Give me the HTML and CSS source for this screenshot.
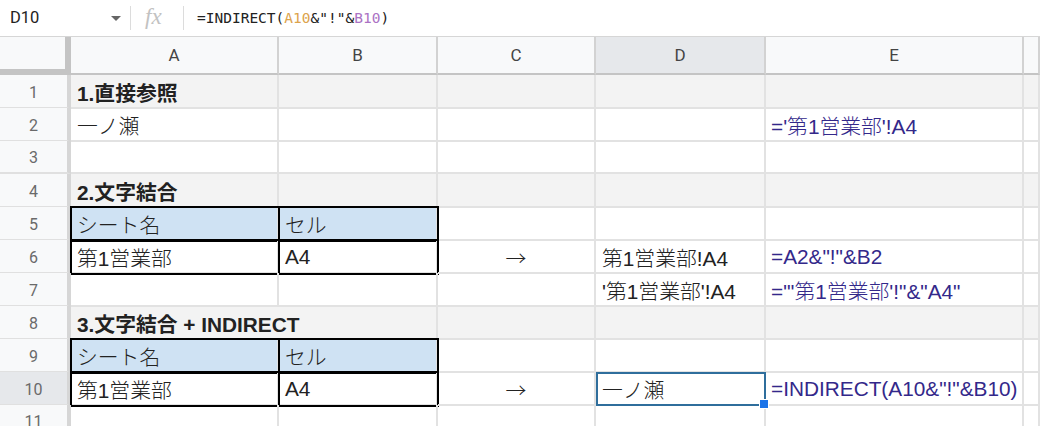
FILE: index.html
```html
<!DOCTYPE html>
<html lang="ja">
<head>
  <meta charset="UTF-8" />
  <title>INDIRECT - シート参照</title>
  <link rel="stylesheet" href="styles.css">
</head>
<body>
  <div class="formula-bar">
    <div class="name-box">D10<span class="caret"></span></div>
    <div class="fx">fx</div>
    <div class="formula">=INDIRECT(<span class="ref-a">A10</span>&amp;"!"&amp;<span class="ref-b">B10</span>)</div>
  </div>

  <div class="sheet">
    <div class="row head">
      <div class="corner"></div>
      <div class="col">A</div>
      <div class="col">B</div>
      <div class="col">C</div>
      <div class="col active">D</div>
      <div class="col">E</div>
      <div class="col"></div>
    </div>

    <div class="row shaded">
      <div class="num">1</div>
      <div class="cell bold">1.直接参照</div>
      <div class="cell"></div><div class="cell"></div><div class="cell"></div><div class="cell"></div><div class="cell"></div>
    </div>
    <div class="row">
      <div class="num">2</div>
      <div class="cell">一ノ瀬</div>
      <div class="cell"></div><div class="cell"></div><div class="cell"></div>
      <div class="cell formula-text">='第1営業部'!A4</div>
      <div class="cell"></div>
    </div>
    <div class="row">
      <div class="num">3</div>
      <div class="cell"></div><div class="cell"></div><div class="cell"></div><div class="cell"></div><div class="cell"></div><div class="cell"></div>
    </div>
    <div class="row shaded">
      <div class="num">4</div>
      <div class="cell bold">2.文字結合</div>
      <div class="cell"></div><div class="cell"></div><div class="cell"></div><div class="cell"></div><div class="cell"></div>
    </div>
    <div class="row">
      <div class="num">5</div>
      <div class="cell boxed label">シート名</div>
      <div class="cell boxed label">セル</div>
      <div class="cell"></div><div class="cell"></div><div class="cell"></div><div class="cell"></div>
    </div>
    <div class="row">
      <div class="num">6</div>
      <div class="cell boxed">第1営業部</div>
      <div class="cell boxed">A4</div>
      <div class="cell arrow">→</div>
      <div class="cell">第1営業部!A4</div>
      <div class="cell formula-text">=A2&amp;"!"&amp;B2</div>
      <div class="cell"></div>
    </div>
    <div class="row">
      <div class="num">7</div>
      <div class="cell"></div><div class="cell"></div><div class="cell"></div>
      <div class="cell">'第1営業部'!A4</div>
      <div class="cell formula-text">="'第1営業部'!"&amp;"A4"</div>
      <div class="cell"></div>
    </div>
    <div class="row shaded">
      <div class="num">8</div>
      <div class="cell bold spill">3.文字結合 + INDIRECT</div>
      <div class="cell"></div><div class="cell"></div><div class="cell"></div><div class="cell"></div><div class="cell"></div>
    </div>
    <div class="row">
      <div class="num">9</div>
      <div class="cell boxed label">シート名</div>
      <div class="cell boxed label">セル</div>
      <div class="cell"></div><div class="cell"></div><div class="cell"></div><div class="cell"></div>
    </div>
    <div class="row">
      <div class="num active">10</div>
      <div class="cell boxed">第1営業部</div>
      <div class="cell boxed">A4</div>
      <div class="cell arrow">→</div>
      <div class="cell selected">一ノ瀬</div>
      <div class="cell formula-text">=INDIRECT(A10&amp;"!"&amp;B10)</div>
      <div class="cell"></div>
    </div>
    <div class="row">
      <div class="num">11</div>
      <div class="cell"></div><div class="cell"></div><div class="cell"></div><div class="cell"></div><div class="cell"></div><div class="cell"></div>
    </div>
  </div>
</body>
</html>
```

FILE: styles.css
```css
* { box-sizing: border-box; }

body {
  margin: 0;
  background: #fff;
  font-family: 'Liberation Sans', 'Noto Sans CJK JP', sans-serif;
  color: #222;
  overflow: hidden;
}

/* formula bar */
.formula-bar {
  display: flex;
  align-items: center;
  height: 37px;
  border-bottom: 1px solid #d6d6d6;
}

.name-box {
  position: relative;
  width: 131px;
  height: 24px;
  padding-left: 10px;
  font-family: Roboto, sans-serif;
  font-size: 16.5px;
  line-height: 24px;
  color: #222;
  border-right: 1px solid #dcdcdc;
}

.caret {
  position: absolute;
  right: 9px;
  top: 10px;
  border-left: 5px solid transparent;
  border-right: 5px solid transparent;
  border-top: 5px solid #666;
}

.fx {
  width: 53px;
  height: 24px;
  padding-left: 14px;
  font-family: 'Liberation Serif', serif;
  font-style: italic;
  font-size: 23px;
  line-height: 22px;
  color: #c2c2c2;
  border-right: 1px solid #dcdcdc;
}

.formula {
  padding-left: 13px;
  font-family: 'DejaVu Sans Mono', monospace;
  font-size: 14.5px;
  color: #222;
}

.ref-a { color: #dca34c; }
.ref-b { color: #ab72c4; }

/* grid */
.row {
  display: grid;
  grid-template-columns: 71px 208px 159px 158px 170px 258px 1fr;
  height: 33px;
}

.row.shaded { background: #f3f3f3; }

.row.head {
  height: 38px;
  background: #f8f9fa;
}

.corner {
  border-right: 6px solid #c4c4c4;
  border-bottom: 6px solid #c4c4c4;
}

.col {
  display: flex;
  align-items: center;
  justify-content: center;
  font-family: Roboto, sans-serif;
  font-size: 17px;
  color: #444;
  border-right: 2px solid #d2d2d2;
  border-bottom: 2px solid #c4c4c4;
}

.col.active { background: #e6e8eb; }

.num {
  display: flex;
  align-items: center;
  justify-content: center;
  padding-top: 2px;
  font-family: Roboto, sans-serif;
  font-size: 16px;
  color: #6a6a6a;
  background: #f8f9fa;
  border-right: 4px solid #d6d6d6;
  border-bottom: 2px solid #e0e0e0;
}

.num.active { background: #e6e8eb; }

.cell {
  display: flex;
  align-items: center;
  padding: 2px 6px 0;
  font-size: 20.8px;
  font-weight: 300;
  white-space: nowrap;
  border-right: 2px solid #e2e2e2;
  border-bottom: 2px solid #e2e2e2;
}

.cell.bold { font-weight: bold; }
.cell.spill { border-right-color: transparent; overflow: visible; }

.cell.label { background: #cfe2f3; }

.cell.boxed {
  outline: 2px solid #000;
  outline-offset: -1px;
}

.cell.arrow {
  justify-content: center;
  font-family: 'Noto Sans CJK JP', sans-serif;
}

.cell.formula-text { color: #33288a; padding-left: 5px; }

.cell.selected {
  position: relative;
  outline: 2px solid #2f6e9c;
  outline-offset: -2px;
}

.cell.selected::after {
  content: '';
  position: absolute;
  right: -5px;
  bottom: -5px;
  width: 8px;
  height: 8px;
  background: #1a73e8;
  border: 1px solid #fff;
}
```
